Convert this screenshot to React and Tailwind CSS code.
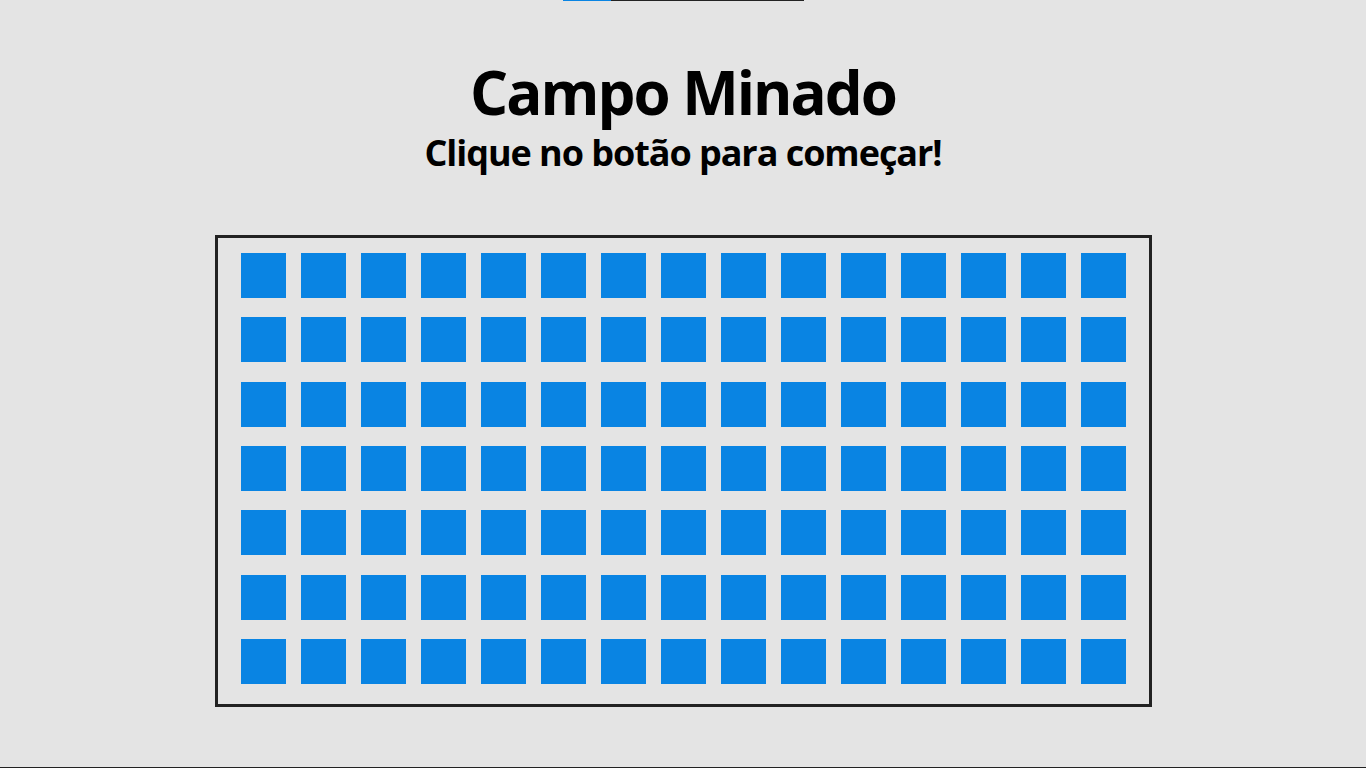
import React, { useEffect, useRef } from "react";

const ROWS = 7;
const COLS = 15;

const App = () => {
  const scroller = useRef(null);

  useEffect(() => {
    if (scroller.current) scroller.current.scrollTop = 43;
  }, []);

  const cells = Array.from({ length: ROWS * COLS }, (_, i) => i);

  return (
    <div
      ref={scroller}
      className="h-screen overflow-y-scroll bg-[#e4e4e4] text-black [&::-webkit-scrollbar]:w-[16px] [&::-webkit-scrollbar]:bg-[#f1f1f1] [&::-webkit-scrollbar-thumb]:bg-[#a8a8a8] [&::-webkit-scrollbar-thumb]:border-x-[3px] [&::-webkit-scrollbar-thumb]:border-solid [&::-webkit-scrollbar-thumb]:border-[#f1f1f1]"
      style={{ fontFamily: '"Open Sans", "Noto Sans", sans-serif' }}
    >
      <div className="h-[810px] flex flex-col items-center">
        {/* barra de progresso */}
        <div className="h-[44px] flex items-end">
          <div className="w-[241px] h-[20px] bg-[#222] flex">
            <div className="w-[48px] h-full bg-[#0984e3]" />
          </div>
        </div>

        <h1 className="mt-[56px] text-[60px] font-bold leading-[70px] tracking-[-2px]">
          Campo Minado
        </h1>
        <h2 className="mt-[6px] text-[36px] font-bold leading-[40px] tracking-[-1.05px]">
          Clique no botão para começar!
        </h2>

        <div className="mt-[62px] w-[937px] border-[3px] border-[#222] pl-[23px] pt-[15px] pb-[20px]">
          <div className="grid grid-cols-[repeat(15,45px)] gap-x-[15px] gap-y-[19.33px]">
            {cells.map((c) => (
              <button key={c} className="w-[45px] h-[45px] bg-[#0984e3]" />
            ))}
          </div>
        </div>
      </div>
      <div className="h-[62px] bg-[#222]" />
    </div>
  );
};

export default App;
